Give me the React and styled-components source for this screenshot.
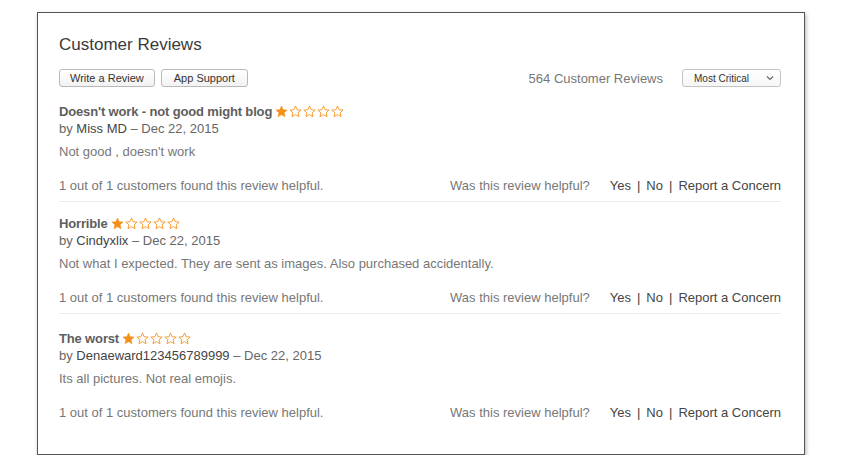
import React from "react";
import styled, { createGlobalStyle } from "styled-components";

const Global = createGlobalStyle`
  html, body { margin: 0; padding: 0; background: #ffffff; }
  body { font-family: "Liberation Sans", Arial, sans-serif; }
`;

const Page = styled.div`
  padding: 12px 0 0 37px;
`;

const Panel = styled.section`
  width: 722px;
  padding: 22px 23px 26px 21px;
  border: 1px solid #555555;
  background: #ffffff;
  box-shadow: 1px 2px 4px rgba(0, 0, 0, 0.3);
`;

const Heading = styled.h1`
  margin: 0;
  font-size: 17px;
  line-height: 20px;
  font-weight: normal;
  color: #3a3a3a;
`;

const Toolbar = styled.div`
  display: flex;
  align-items: center;
  justify-content: space-between;
  margin-top: 14px;
  height: 18px;
`;

const Group = styled.div`
  display: flex;
  align-items: center;
  gap: ${(p) => p.$gap || 6}px;
`;

const Button = styled.button`
  height: 18px;
  padding: 0 ${(p) => p.$pad}px;
  border: 1px solid #b9b9b9;
  border-radius: 3px;
  background: linear-gradient(#ffffff, #f2f2f2);
  font-family: "Liberation Sans", Arial, sans-serif;
  font-size: 11px;
  color: #333333;
  line-height: 16px;
`;

const Count = styled.span`
  font-size: 13px;
  color: #777777;
`;

const Select = styled.div`
  box-sizing: border-box;
  width: 99px;
  height: 18px;
  display: flex;
  align-items: center;
  justify-content: space-between;
  padding: 0 6px 0 11px;
  border: 1px solid #c4c4c4;
  border-radius: 3px;
  background: linear-gradient(#ffffff, #f6f6f6);
  font-size: 10px;
  color: #333333;
`;

const Review = styled.article`
  padding: ${(p) => p.$top}px 0 7px;
  border-bottom: ${(p) => (p.$last ? "none" : "1px solid #ececec")};
`;

const Title = styled.div`
  display: flex;
  align-items: center;
  gap: 3px;
  font-size: 13px;
  line-height: 17px;
  font-weight: bold;
  letter-spacing: -0.15px;
  color: #5e5e5e;
`;

const Stars = styled.span`
  display: inline-flex;
  gap: 1px;
`;

const Byline = styled.div`
  font-size: 13px;
  line-height: 17px;
  color: #666666;
`;

const Author = styled.span`
  color: #444444;
`;

const Body = styled.p`
  margin: 6px 0 0;
  font-size: 13px;
  line-height: 17px;
  color: #777777;
`;

const Footer = styled.div`
  display: flex;
  justify-content: space-between;
  margin-top: 17px;
  font-size: 13px;
  line-height: 17px;
  color: #777777;
`;

const Actions = styled.div`
  display: flex;
  gap: 20px;
`;

const Links = styled.span`
  color: #444444;
`;

const Sep = styled.span`
  margin: 0 6px;
`;

const Star = ({ filled }) => (
  <svg width="13" height="13" viewBox="0 0 24 24">
    <path
      d="M12 1.8l3 6.9 7.4.7-5.6 4.9 1.7 7.3L12 17.8l-6.5 3.8 1.7-7.3-5.6-4.9 7.4-.7z"
      fill={filled ? "#f39019" : "none"}
      stroke="#f39019"
      strokeWidth={filled ? 1 : 1.6}
      strokeLinejoin="round"
    />
  </svg>
);

const reviews = [
  {
    title: "Doesn't work - not good might blog",
    author: "Miss MD",
    body: "Not good , doesn't work",
    top: 16,
  },
  {
    title: "Horrible",
    author: "Cindyxlix",
    body: "Not what I expected. They are sent as images. Also purchased accidentally.",
    top: 13,
  },
  {
    title: "The worst",
    author: "Denaeward123456789999",
    body: "Its all pictures. Not real emojis.",
    top: 16,
  },
];

export default function App() {
  return (
    <Page>
      <Global />
      <Panel>
        <Heading>Customer Reviews</Heading>
        <Toolbar>
          <Group>
            <Button $pad={10}>Write a Review</Button>
            <Button $pad={12}>App Support</Button>
          </Group>
          <Group $gap={19}>
            <Count>564 Customer Reviews</Count>
            <Select>
              <span>Most Critical</span>
              <svg width="8" height="6" viewBox="0 0 8 6">
                <polyline points="1,1.5 4,4.5 7,1.5" fill="none" stroke="#666" strokeWidth="1.2" />
              </svg>
            </Select>
          </Group>
        </Toolbar>
        {reviews.map((r, i) => (
          <Review key={i} $top={r.top} $last={i === reviews.length - 1}>
            <Title>
              {r.title}
              <Stars>
                {[0, 1, 2, 3, 4].map((s) => (
                  <Star key={s} filled={s === 0} />
                ))}
              </Stars>
            </Title>
            <Byline>
              by <Author>{r.author}</Author> – Dec 22, 2015
            </Byline>
            <Body>{r.body}</Body>
            <Footer>
              <span>1 out of 1 customers found this review helpful.</span>
              <Actions>
                <span>Was this review helpful?</span>
                <Links>
                  Yes<Sep>|</Sep>No<Sep>|</Sep>Report a Concern
                </Links>
              </Actions>
            </Footer>
          </Review>
        ))}
      </Panel>
    </Page>
  );
}
